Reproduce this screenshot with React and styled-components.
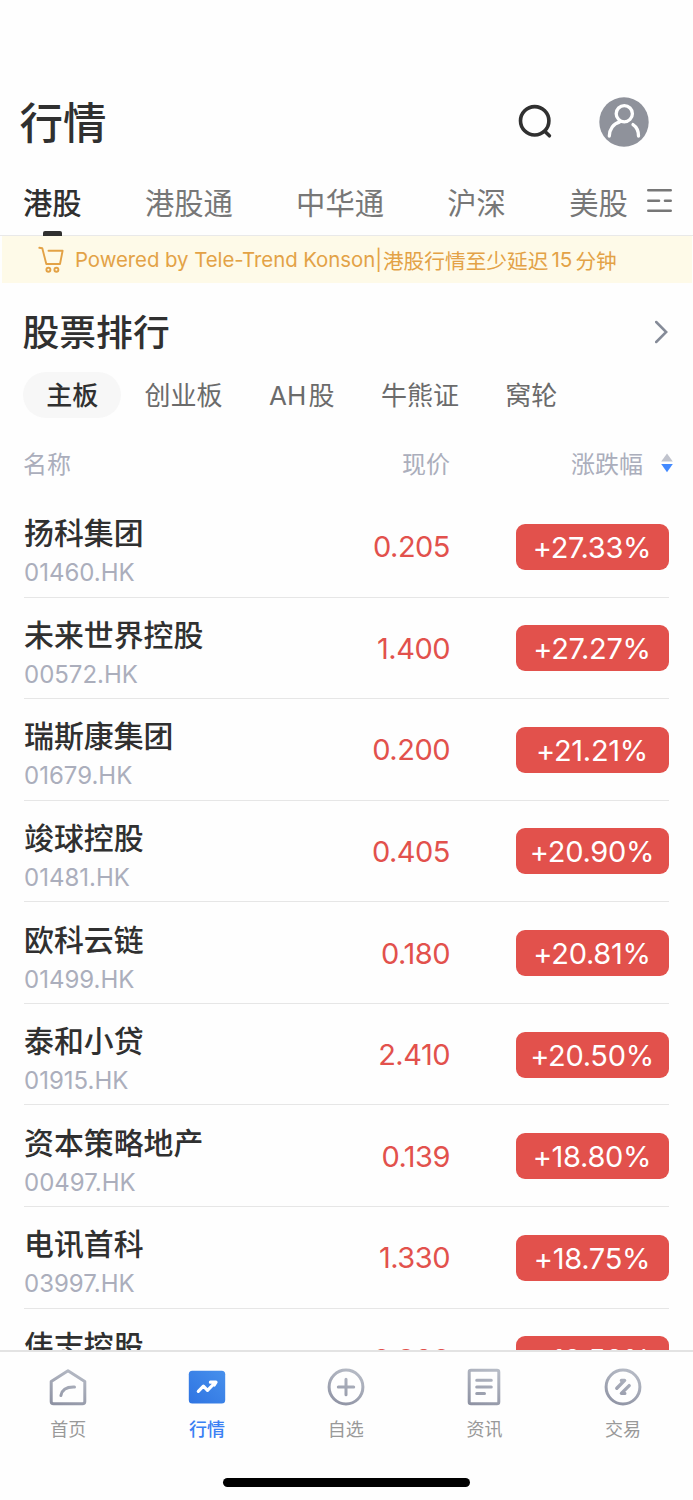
import React, { useState } from 'react';
import styled, { createGlobalStyle, css } from 'styled-components';

const GlobalStyle = createGlobalStyle`
  * {
    box-sizing: border-box;
  }

  body {
    margin: 0;
    background: #fefefe;
    font-family: Inter, 'Noto Sans CJK SC', sans-serif;
    color: #303030;
  }

  button {
    border: none;
    padding: 0;
    background: none;
    font-family: inherit;
    color: inherit;
    cursor: pointer;
  }

  svg {
    display: block;
    flex: none;
  }
`;

const Page = styled.div`
  display: flex;
  flex-direction: column;
  height: 1500px;
  overflow: hidden;
  white-space: nowrap;
`;

const Header = styled.header`
  display: flex;
  align-items: center;
  height: 76px;
  margin-top: 84px;
  padding: 0 44px 0 19.5px;
  flex: none;
`;

const Title = styled.h1`
  margin: 0 auto 0 0;
  padding-top: 2px;
  font-size: 43.5px;
  font-weight: 500;
  line-height: 76px;
`;

const SearchButton = styled.button`
  margin-right: 44px;
`;

const Tabs = styled.nav`
  display: flex;
  align-items: flex-start;
  height: 76px;
  padding-left: 23px;
  border-bottom: 1px solid #e9e9e9;
  flex: none;
`;

const Tab = styled.button`
  display: flex;
  flex-direction: column;
  align-items: center;
  margin-right: 63.3px;
  font-size: 29.3px;
  line-height: 44px;
  padding-top: 22px;
  color: #777;

  &:last-of-type {
    margin-right: 18.5px;
  }

  ${props =>
    props.$active &&
    css`
      color: #303030;
      font-weight: 500;

      &::after {
        content: '';
        width: 19px;
        height: 5px;
        margin-top: 5px;
        border-radius: 2px 2px 0 0;
        background: #303030;
      }
    `}
`;

const MenuIcon = styled.svg`
  margin-top: 28px;
`;

const Notice = styled.div`
  display: flex;
  align-items: center;
  height: 47px;
  margin: 0 1px 0 2px;
  padding-left: 36px;
  background: #fefae8;
  color: #e3a246;
  font-size: 20.7px;
  flex: none;
`;

const NoticeText = styled.span`
  margin-left: 11px;
  font-size: 20.4px;
  letter-spacing: -0.05px;
`;

const Delay = styled.span`
  margin-left: ${props => props.$gap}px;
`;

const Section = styled.main`
  flex: 1;
  min-height: 0;
  overflow: hidden;
  padding: 0 24px;
`;

const SectionHeader = styled.div`
  display: flex;
  align-items: center;
  justify-content: space-between;
  height: 89px;
  padding-top: 9px;
`;

const SectionTitle = styled.h2`
  margin: 0 0 0 -1.5px;
  padding-top: 2px;
  font-size: 36.8px;
  font-weight: 500;
  line-height: 60px;
`;

const Chips = styled.div`
  display: flex;
  margin-left: -1px;
`;

const Chip = styled.button`
  height: 46px;
  padding: 2px 23.2px 0;
  border-radius: 23px;
  font-size: 26px;
  line-height: 44px;
  word-spacing: -5px;
  color: #6b6b6b;

  ${props =>
    props.$active &&
    css`
      color: #303030;
      font-weight: 500;
      background: #f7f7f7;
    `}
`;

const columns = css`
  display: grid;
  grid-template-columns: 250px 176px 1fr;
  align-items: center;
`;

const TableHead = styled.div`
  ${columns}
  height: 78px;
  padding-top: 11px;
  font-size: 24px;
  color: #abaebc;
`;

const HeadCell = styled.span`
  margin-left: -1px;
  text-align: ${props => props.$align || 'left'};
`;

const SortCell = styled.button`
  display: flex;
  align-items: center;
  justify-content: flex-end;
  gap: 18px;
  margin-right: -4px;
  font-size: 24px;
  color: #abaebc;
`;

const Row = styled.div`
  ${columns}
  height: 101.57px;
  border-bottom: 1px solid #e6e6e6;
`;

const Stock = styled.div`
  padding-top: 9px;
`;

const StockName = styled.div`
  font-size: 29.9px;
  font-weight: 500;
  line-height: 44px;
`;

const StockCode = styled.div`
  margin-top: 1px;
  font-size: 24px;
  line-height: 34px;
  color: #abaebc;
`;

const Price = styled.span`
  padding-top: 1px;
  font-size: 29px;
  letter-spacing: -0.5px;
  text-align: right;
  color: #e2514c;
`;

const Change = styled.span`
  justify-self: end;
  width: 153px;
  height: 46px;
  margin: 1px 0.5px 0 0;
  border-radius: 9px;
  font-size: 29px;
  letter-spacing: -0.3px;
  line-height: 47px;
  text-align: center;
  color: #fff;
  background: #e2514c;
`;

const BottomBar = styled.footer`
  height: 150px;
  border-top: 2px solid #e3e3e3;
  background: #fefefe;
  flex: none;
`;

const BottomNav = styled.nav`
  display: grid;
  grid-template-columns: repeat(5, 138.7px);
  margin-left: -1px;
  height: 126px;
`;

const NavItem = styled.button`
  display: flex;
  flex-direction: column;
  align-items: center;
  padding-top: 15px;
  font-size: 18px;
  line-height: 26px;
  font-weight: ${props => (props.$active ? 500 : 400)};
  color: ${props => (props.$active ? '#3a80f4' : '#999')};
`;

const NavLabel = styled.span`
  margin-top: 10px;
`;

const HomeIndicator = styled.div`
  width: 247px;
  height: 9px;
  margin: 0 auto;
  border-radius: 5px;
  background: #000;
`;

const MARKETS = ['港股', '港股通', '中华通', '沪深', '美股'];

const BOARDS = ['主板', '创业板', 'AH 股', '牛熊证', '窝轮'];

const STOCKS = [
  { name: '扬科集团', code: '01460.HK', price: '0.205', change: '+27.33%' },
  { name: '未来世界控股', code: '00572.HK', price: '1.400', change: '+27.27%' },
  { name: '瑞斯康集团', code: '01679.HK', price: '0.200', change: '+21.21%' },
  { name: '竣球控股', code: '01481.HK', price: '0.405', change: '+20.90%' },
  { name: '欧科云链', code: '01499.HK', price: '0.180', change: '+20.81%' },
  { name: '泰和小贷', code: '01915.HK', price: '2.410', change: '+20.50%' },
  { name: '资本策略地产', code: '00497.HK', price: '0.139', change: '+18.80%' },
  { name: '电讯首科', code: '03997.HK', price: '1.330', change: '+18.75%' },
  { name: '伟志控股', code: '01305.HK', price: '0.980', change: '+18.52%' },
];

const SearchIcon = () => (
  <svg width="40" height="40" fill="none" stroke="#303030" strokeWidth="3.6" strokeLinecap="round">
    <circle cx="19.7" cy="18.8" r="14.2" />
    <path d="M30 29.5L34.4 33.8" />
  </svg>
);

const Avatar = () => (
  <svg width="50" height="50" fill="none" stroke="#fff" strokeWidth="3.3" strokeLinecap="round">
    <circle cx="25" cy="25" r="24.7" fill="#8f929b" stroke="none" />
    <circle cx="25.3" cy="16.7" r="8.1" />
    <path d="M10.3 39C10.5 32 14.5 26.5 20.5 25.2M39.5 39C39.5 34 37.3 29.8 34 27.6" />
  </svg>
);

const CartIcon = () => (
  <svg width="26" height="27" fill="none" stroke="#e3a246" strokeWidth="1.9" strokeLinecap="round" strokeLinejoin="round">
    <path d="M1.3 1.8L4.3 2.3L8.3 18H22L24.6 4.8H10.5" />
    <circle cx="10.4" cy="23.7" r="2" />
    <circle cx="18.4" cy="23.7" r="2" />
  </svg>
);

const NavGradient = ({ id }) => (
  <defs>
    <linearGradient id={id} gradientUnits="userSpaceOnUse" x1="28" y1="0" x2="12" y2="40">
      <stop offset="0" stopColor="#b8bdc7" />
      <stop offset="1" stopColor="#8e92a3" />
    </linearGradient>
  </defs>
);

const NavSvg = ({ id, children }) => (
  <svg
    width="40"
    height="40"
    fill="none"
    stroke={`url(#${id})`}
    strokeWidth="3"
    strokeLinecap="round"
    strokeLinejoin="round"
  >
    <NavGradient id={id} />
    {children}
  </svg>
);

const HomeIcon = () => (
  <NavSvg id="home">
    <path d="M20 3.8L36.8 14.5V34.5Q36.8 36.8 34.5 36.8H5.5Q3.2 36.8 3.2 34.5V14.5Z" />
    <path d="M12.9 28.6C14 22.5 18.5 19.8 26.5 20.1" />
  </NavSvg>
);

const MarketIcon = () => (
  <svg width="40" height="40" fill="none">
    <defs>
      <linearGradient id="market" x1="1" y1="0" x2="0" y2="1">
        <stop offset="0" stopColor="#4790ec" />
        <stop offset="1" stopColor="#2f74e2" />
      </linearGradient>
    </defs>
    <rect x="1.8" y="3.7" width="36.4" height="32.7" rx="3.5" fill="url(#market)" />
    <path
      d="M11.3 24.3L16.4 19.2L20.5 23.3L28.2 15.5M23.4 15.2H29L27.3 18"
      stroke="#fff"
      strokeWidth="3.2"
      strokeLinecap="round"
      strokeLinejoin="round"
    />
  </svg>
);

const WatchIcon = () => (
  <NavSvg id="watch">
    <circle cx="20" cy="20" r="16.9" />
    <path d="M20 12.3V27.7M12.3 20H27.7" />
  </NavSvg>
);

const NewsIcon = () => (
  <NavSvg id="news">
    <rect x="5.2" y="3.3" width="29.6" height="33.5" rx="1.8" />
    <path d="M12.7 13.3H27.3M12.7 20H27.3M12.7 26.4H20.5" />
  </NavSvg>
);

const TradeIcon = () => (
  <NavSvg id="trade">
    <circle cx="20" cy="20" r="16.9" />
    <path d="M13.8 21.2L21.6 13.4H18.4M26.2 18.6L18.4 26.4H21.8" strokeWidth="3.4" />
  </NavSvg>
);

const NAV = [
  { label: '首页', icon: HomeIcon },
  { label: '行情', icon: MarketIcon },
  { label: '自选', icon: WatchIcon },
  { label: '资讯', icon: NewsIcon },
  { label: '交易', icon: TradeIcon },
];

function App() {
  const [market, setMarket] = useState('港股');
  const [board, setBoard] = useState('主板');
  const [page, setPage] = useState('行情');

  return (
    <Page>
      <GlobalStyle />
      <Header>
        <Title>行情</Title>
        <SearchButton>
          <SearchIcon />
        </SearchButton>
        <Avatar />
      </Header>
      <Tabs>
        {MARKETS.map(item => (
          <Tab key={item} $active={item === market} onClick={() => setMarket(item)}>
            {item}
          </Tab>
        ))}
        <MenuIcon width="27" height="26" stroke="#777" strokeWidth="2.6" strokeLinecap="round">
          <path d="M2.3 2.3H24.7M2.3 12.7H13M19 12.7H24.7M2.3 22.7H24.7" />
        </MenuIcon>
      </Tabs>
      <Notice>
        <CartIcon />
        <NoticeText>Powered by Tele-Trend Konson|</NoticeText>
        <Delay $gap={1}>港股行情至少延迟</Delay>
        <Delay $gap={3}>15</Delay>
        <Delay $gap={3}>分钟</Delay>
      </Notice>
      <Section>
        <SectionHeader>
          <SectionTitle>股票排行</SectionTitle>
          <svg width="14" height="24" fill="none" stroke="#858b98" strokeWidth="2.5" strokeLinecap="round">
            <path d="M1.2 2L11.2 12L1.2 22" />
          </svg>
        </SectionHeader>
        <Chips>
          {BOARDS.map(item => (
            <Chip key={item} $active={item === board} onClick={() => setBoard(item)}>
              {item}
            </Chip>
          ))}
        </Chips>
        <TableHead>
          <HeadCell>名称</HeadCell>
          <HeadCell $align="right">现价</HeadCell>
          <SortCell>
            涨跌幅
            <svg width="12" height="20">
              <path d="M6 0.5L11.8 8.5H0.2Z" fill="#c0c3cd" />
              <path d="M6 19.2L11.8 11H0.2Z" fill="#438aff" />
            </svg>
          </SortCell>
        </TableHead>
        {STOCKS.map(stock => (
          <Row key={stock.code}>
            <Stock>
              <StockName>{stock.name}</StockName>
              <StockCode>{stock.code}</StockCode>
            </Stock>
            <Price>{stock.price}</Price>
            <Change>{stock.change}</Change>
          </Row>
        ))}
      </Section>
      <BottomBar>
        <BottomNav>
          {NAV.map(({ label, icon: Icon }) => (
            <NavItem key={label} $active={label === page} onClick={() => setPage(label)}>
              <Icon />
              <NavLabel>{label}</NavLabel>
            </NavItem>
          ))}
        </BottomNav>
        <HomeIndicator />
      </BottomBar>
    </Page>
  );
}

export default App;
